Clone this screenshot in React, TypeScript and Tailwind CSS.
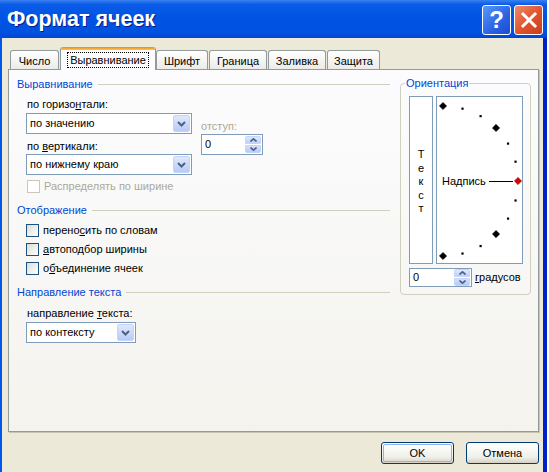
import React from 'react'

// Windows XP "Формат ячеек" dialog, Alignment tab

function DropBtn() {
  return (
    <div className="ml-auto m-px w-[17px] h-[17px] rounded-[2px] border border-[#C6D4FA] bg-[linear-gradient(180deg,#DFE8FE,#B8CBF6)] flex items-center justify-center">
      <svg width="9" height="6" viewBox="0 0 9 6">
        <polyline points="1,1 4.5,4.5 8,1" fill="none" stroke="#4D6185" strokeWidth="2" />
      </svg>
    </div>
  )
}

function SpinBtns() {
  return (
    <div className="ml-auto mr-px flex flex-col gap-px">
      <div className="w-[16px] h-[8px] rounded-t-[2px] border border-[#C6D4FA] bg-[linear-gradient(180deg,#DFE8FE,#BED0F8)] flex items-center justify-center">
        <svg width="7" height="4" viewBox="0 0 7 4">
          <polyline points="0.5,3.5 3.5,0.8 6.5,3.5" fill="none" stroke="#4D6185" strokeWidth="1.6" />
        </svg>
      </div>
      <div className="w-[16px] h-[8px] rounded-b-[2px] border border-[#C6D4FA] bg-[linear-gradient(180deg,#D3DFFC,#B8CBF6)] flex items-center justify-center">
        <svg width="7" height="4" viewBox="0 0 7 4">
          <polyline points="0.5,0.5 3.5,3.2 6.5,0.5" fill="none" stroke="#4D6185" strokeWidth="1.6" />
        </svg>
      </div>
    </div>
  )
}

function Checkbox({ disabled }: { disabled?: boolean }) {
  return (
    <div
      className={
        disabled
          ? 'w-[13px] h-[13px] shrink-0 border border-[#CAC8BB] bg-white'
          : 'w-[13px] h-[13px] shrink-0 border border-[#1C5180] bg-[linear-gradient(135deg,#DCDCD7,#FFFFFF)]'
      }
    />
  )
}

function SectionHead({ title }: { title: string }) {
  return (
    <div className="flex items-center h-[13px]">
      <span className="text-[#0046D5] leading-[13px]">{title}</span>
      <div className="flex-1 h-px bg-[#D0D0BF] ml-[5px]" />
    </div>
  )
}

const U = ({ children }: { children: React.ReactNode }) => (
  <span className="underline underline-offset-[1px] decoration-1">{children}</span>
)

const TABS = ['Число', 'Выравнивание', 'Шрифт', 'Граница', 'Заливка', 'Защита']
const TAB_W = ['w-[50px]', 'w-[96px]', 'w-[53px]', 'w-[59px]', 'w-[59px]', 'w-[54px]']

function Dial() {
  const cx = 6
  const cy = 84
  const r = 75
  const pts = []
  for (let i = 0; i <= 12; i++) {
    const a = ((90 - i * 15) * Math.PI) / 180
    pts.push({ x: cx + r * Math.cos(a), y: cy - r * Math.sin(a), big: i % 3 === 0, red: i === 6 })
  }
  return (
    <div className="relative w-[87px] h-[168px] border border-[#7F9DB9] bg-white">
      <svg className="absolute left-0 top-0" width="85" height="166" viewBox="0 0 85 166">
        <line x1="52" y1="84.5" x2="76" y2="84.5" stroke="#000" strokeWidth="1" />
        {pts.map((p, i) =>
          p.big ? (
            <polygon
              key={i}
              points={`${p.x},${p.y - 3.6} ${p.x + 3.6},${p.y} ${p.x},${p.y + 3.6} ${p.x - 3.6},${p.y}`}
              fill={p.red ? '#E00000' : '#000'}
              stroke={p.red ? '#700000' : '#000'}
              strokeWidth="0.6"
            />
          ) : (
            <rect key={i} x={p.x - 1} y={p.y - 1} width="2.2" height="2.2" fill="#000" />
          ),
        )}
      </svg>
      <span className="absolute left-[5px] top-[78px] leading-[13px]">Надпись</span>
    </div>
  )
}

export default function App() {
  return (
    <div className="w-[549px] h-[472px] bg-white overflow-hidden font-['Liberation_Sans',Arial,sans-serif] text-[11px] text-black">
      <div className="w-[547px] h-full flex flex-col">
        {/* Title bar */}
        <div className="h-[38px] shrink-0 flex items-start pl-[7px] pr-[4px] bg-[linear-gradient(180deg,#3A80F0_0%,#0A5CE8_12%,#0054E3_45%,#0052E0_85%,#0046D0_100%)]">
          <span className="flex-1 pt-[7px] text-white font-bold text-[21.5px] leading-[24px] [text-shadow:1px_1px_0_#0A1A8C]">
            Формат ячеек
          </span>
          <div className="flex gap-[3px] pt-[5px]">
            <div className="w-[29px] h-[30px] rounded-[3px] border border-white bg-[linear-gradient(135deg,#5A98FA,#2A62E4_60%,#1A4CD0)] flex items-center justify-center text-white font-bold text-[24px] leading-none">
              ?
            </div>
            <div className="w-[29px] h-[30px] rounded-[3px] border border-white bg-[linear-gradient(135deg,#EF8A6A,#E0522C_55%,#C83E1C)] flex items-center justify-center">
              <svg width="18" height="18" viewBox="0 0 18 18">
                <path d="M3 3 L15 15 M15 3 L3 15" stroke="#fff" strokeWidth="3" strokeLinecap="square" />
              </svg>
            </div>
          </div>
        </div>

        {/* Body */}
        <div className="flex-1 flex flex-col bg-[#ECE9D8] border-l-2 border-l-[#0055EA] border-r-4 border-r-[#0020C8] pl-[6px] pr-[4px] pt-[9px]">
          {/* Tabs */}
          <div className="flex items-end h-[22px] ml-[2px] relative z-10">
            {TABS.map((t, i) =>
              i === 1 ? (
                <div
                  key={t}
                  className={`${TAB_W[i]} h-[23px] -mb-px flex flex-col rounded-t-[3px] border-x border-[#919B9C] bg-[#FCFCFE] overflow-hidden`}
                >
                  <div className="h-[3px] shrink-0 bg-[linear-gradient(180deg,#E68B2C,#FFC73C)]" />
                  <div className="flex-1 flex items-center justify-center pb-[1px]">
                    <span className="border border-dotted border-black px-[2px] leading-[14px]">{t}</span>
                  </div>
                </div>
              ) : (
                <div
                  key={t}
                  className={`${TAB_W[i]} h-[19px] pr-px`}
                >
                  <div className="h-full flex items-center justify-center pt-[2px] rounded-t-[3px] border border-b-0 border-[#919B9C] bg-[linear-gradient(180deg,#FFFFFF,#ECEBE6)]">
                    {t}
                  </div>
                </div>
              ),
            )}
          </div>

          {/* Panel */}
          <div className="w-[531px] h-[363px] shrink-0 border border-[#919B9C] bg-[linear-gradient(180deg,#FCFCFE,#F4F3EE)] shadow-[1px_1px_0_#C8C5B4] flex pt-[8px]">
            {/* Left column */}
            <div className="w-[381px] pl-[8px] flex flex-col">
              <SectionHead title="Выравнивание" />
              <div className="flex pl-[9px]">
                <div className="flex flex-col">
                  <div className="mt-[7px] ml-px leading-[13px]">
                    по горизо<U>н</U>тали:
                  </div>
                  <div className="mt-[2px] flex items-center h-[21px] w-[166px] border border-[#7F9DB9] bg-white">
                    <span className="pl-[3px]">по значению</span>
                    <DropBtn />
                  </div>
                  <div className="mt-[6px] ml-px leading-[13px]">
                    по <U>в</U>ертикали:
                  </div>
                  <div className="mt-[1px] flex items-center h-[21px] w-[166px] border border-[#7F9DB9] bg-white">
                    <span className="pl-[3px]">по нижнему краю</span>
                    <DropBtn />
                  </div>
                </div>
                <div className="flex flex-col ml-[9px] pt-[29px]">
                  <div className="leading-[13px] text-[#ACA899]">отступ:</div>
                  <div className="mt-[1px] flex items-center h-[21px] w-[62px] border border-[#7F9DB9] bg-white">
                    <span className="pl-[3px]">0</span>
                    <SpinBtns />
                  </div>
                </div>
              </div>
              <div className="mt-[5px] ml-[10px] flex items-center gap-[4px] h-[13px] text-[#ACA899]">
                <Checkbox disabled />
                <span>Распределять по ширине</span>
              </div>

              <div className="mt-[11px]">
                <SectionHead title="Отображение" />
              </div>
              <div className="mt-[7px] ml-[9px] flex items-center gap-[4px] h-[13px]">
                <Checkbox />
                <span>
                  перено<U>с</U>ить по словам
                </span>
              </div>
              <div className="mt-[6px] ml-[9px] flex items-center gap-[4px] h-[13px]">
                <Checkbox />
                <span>
                  <U>а</U>втоподбор ширины
                </span>
              </div>
              <div className="mt-[6px] ml-[9px] flex items-center gap-[4px] h-[13px]">
                <Checkbox />
                <span>
                  о<U>б</U>ъединение ячеек
                </span>
              </div>

              <div className="mt-[11px]">
                <SectionHead title="Направление текста" />
              </div>
              <div className="mt-[8px] ml-[10px] leading-[13px]">
                направление <U>т</U>екста:
              </div>
              <div className="mt-[2px] ml-[9px] flex items-center h-[21px] w-[110px] border border-[#7F9DB9] bg-white">
                <span className="pl-[3px]">по контексту</span>
                <DropBtn />
              </div>
            </div>

            {/* Orientation */}
            <fieldset className="ml-[10px] -mt-px w-[131px] h-[218px] rounded-[4px] border border-[#D0D0BF]">
              <legend className="ml-[4px] px-px text-[#0046D5] leading-[13px]">Ориентация</legend>
              <div className="pl-[8px] pt-[6px] flex flex-col">
                <div className="flex gap-[3px]">
                  <div className="w-[24px] h-[168px] border border-[#7F9DB9] bg-white flex flex-col items-center pt-[51px] leading-[13.5px]">
                    <span>Т</span>
                    <span>е</span>
                    <span>к</span>
                    <span>с</span>
                    <span>т</span>
                  </div>
                  <Dial />
                </div>
                <div className="mt-[4px] flex items-center">
                  <div className="flex items-center h-[19px] w-[63px] border border-[#7F9DB9] bg-white">
                    <span className="pl-[3px]">0</span>
                    <SpinBtns />
                  </div>
                  <span className="ml-[3px]">
                    <U>г</U>радусов
                  </span>
                </div>
              </div>
            </fieldset>
          </div>

          {/* Buttons */}
          <div className="mt-[10px] w-[531px] flex justify-end gap-[12px]">
            <div className="w-[73px] h-[22px] rounded-[3px] border border-[#003C74] bg-[linear-gradient(180deg,#FFFFFF,#F0F0EA_70%,#D6D0C5)] p-px">
              <div className="h-full rounded-[2px] border border-[#8CB4F2] flex items-center justify-center">OK</div>
            </div>
            <div className="w-[73px] h-[22px] rounded-[3px] border border-[#003C74] bg-[linear-gradient(180deg,#FFFFFF,#F0F0EA_70%,#D6D0C5)] flex items-center justify-center">
              Отмена
            </div>
          </div>
        </div>
      </div>
    </div>
  )
}
